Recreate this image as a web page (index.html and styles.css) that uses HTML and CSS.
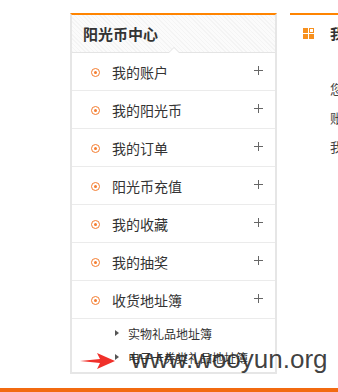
FILE: index.html
```html
<!DOCTYPE html>
<html lang="zh-CN">
<head>
    <meta charset="UTF-8">
    <title>阳光币中心</title>
    <link rel="stylesheet" href="styles.css">
</head>
<body>
    <div class="page">
        <div class="sidebar">
            <div class="side-head">
                <h3>阳光币中心</h3>
                <span class="notch"></span>
            </div>
            <ul class="menu">
                <li class="menu-item"><span class="dot"></span><span class="label">我的账户</span><span class="plus"></span></li>
                <li class="menu-item"><span class="dot"></span><span class="label">我的阳光币</span><span class="plus"></span></li>
                <li class="menu-item"><span class="dot"></span><span class="label">我的订单</span><span class="plus"></span></li>
                <li class="menu-item"><span class="dot"></span><span class="label">阳光币充值</span><span class="plus"></span></li>
                <li class="menu-item"><span class="dot"></span><span class="label">我的收藏</span><span class="plus"></span></li>
                <li class="menu-item"><span class="dot"></span><span class="label">我的抽奖</span><span class="plus"></span></li>
                <li class="menu-item"><span class="dot"></span><span class="label">收货地址簿</span><span class="plus"></span></li>
            </ul>
            <ul class="sub-menu">
                <li class="sub-item"><span class="tri"></span>实物礼品地址簿</li>
                <li class="sub-item"><span class="tri"></span>电子卡券类礼品地址簿</li>
            </ul>
        </div>

        <div class="main">
            <div class="main-head">
                <span class="grid-icon">
                    <i></i><i class="hollow"></i><i></i><i></i>
                </span>
                <h3>我的账户</h3>
            </div>
            <div class="main-body">
                <p>您好，欢迎来到阳光币中心</p>
                <p>账户余额：0</p>
                <p>我的阳光币：0</p>
            </div>
        </div>
    </div>

    <div class="footer-bar"></div>

    <svg class="arrow" width="36" height="16" viewBox="0 0 36 16">
        <polygon points="0,8 20,6 17,0 35,8 17,16 20,10" fill="#f0302a"/>
    </svg>
    <div class="watermark">www.wooyun.org</div>
</body>
</html>
```

FILE: styles.css
```css
body {
    margin: 0;
    padding: 0;
    width: 338px;
    height: 392px;
    overflow: hidden;
    position: relative;
    background-color: #ffffff;
    font-family: "Microsoft YaHei", "Noto Sans CJK SC", sans-serif;
    color: #333;
}
ul {
    list-style: none;
    margin: 0;
    padding: 0;
}
h3 {
    margin: 0;
}
.page {
    display: flex;
    align-items: flex-start;
    gap: 13px;
    padding: 13px 0 0 70px;
}
.sidebar {
    flex: none;
    width: 203px;
    border: 2px solid #e6e6e6;
    border-top: 2px solid #ff8400;
    background-color: #fff;
}
.side-head {
    position: relative;
    height: 37px;
    border-bottom: 1px solid #e4e4e4;
    background: repeating-linear-gradient(45deg, #f4f4f4 0, #f4f4f4 1px, #fbfbfb 1px, #fbfbfb 3px);
}
.side-head h3 {
    font-size: 15px;
    font-weight: bold;
    line-height: 37px;
    padding-left: 11px;
    color: #333;
}
.notch {
    position: absolute;
    left: 96px;
    bottom: -1px;
    width: 0;
    height: 0;
    border-left: 6px solid transparent;
    border-right: 6px solid transparent;
    border-bottom: 6px solid #e4e4e4;
}
.notch::after {
    content: "";
    position: absolute;
    left: -5px;
    top: 1px;
    border-left: 5px solid transparent;
    border-right: 5px solid transparent;
    border-bottom: 5px solid #fff;
}
.menu-item {
    display: flex;
    align-items: center;
    height: 37px;
    border-bottom: 1px solid #ebebeb;
    padding: 0 12px 0 19px;
}
.dot {
    box-sizing: border-box;
    width: 9px;
    height: 9px;
    border: 1.5px solid #f47d30;
    border-radius: 50%;
    position: relative;
    margin-right: 12px;
    margin-top: 2px;
}
.dot::after {
    content: "";
    position: absolute;
    left: 1.5px;
    top: 1.5px;
    width: 3px;
    height: 3px;
    border-radius: 50%;
    background-color: #f47d30;
}
.label {
    flex: 1;
    font-size: 14px;
}
.plus {
    width: 9px;
    height: 9px;
    position: relative;
    margin-top: -2px;
}
.plus::before, .plus::after {
    content: "";
    position: absolute;
    background-color: #666;
}
.plus::before {
    left: 0;
    top: 4px;
    width: 9px;
    height: 1px;
}
.plus::after {
    left: 4px;
    top: 0;
    width: 1px;
    height: 9px;
}
.sub-menu {
    padding: 2px 0 3px 0;
}
.sub-item {
    display: flex;
    align-items: center;
    height: 24px;
    padding-left: 43px;
    font-size: 12px;
    color: #333;
}
.tri {
    width: 0;
    height: 0;
    border-top: 3px solid transparent;
    border-bottom: 3px solid transparent;
    border-left: 4px solid #555;
    margin-right: 9px;
}
.main {
    flex: 1;
    border-top: 2px solid #ff8400;
    white-space: nowrap;
}
.main-head {
    display: flex;
    align-items: center;
    height: 36px;
    padding-left: 13px;
}
.grid-icon {
    display: grid;
    grid-template-columns: 5px 5px;
    grid-template-rows: 5px 5px;
    gap: 1px;
    margin-right: 16px;
}
.grid-icon i {
    background-color: #f7901e;
}
.grid-icon i.hollow {
    background-color: #fff;
    border: 1px solid #f7901e;
    box-sizing: border-box;
}
.main-head h3 {
    font-size: 14px;
    font-weight: bold;
    color: #333;
}
.main-body {
    padding: 23px 0 0 40px;
}
.main-body p {
    margin: 0;
    font-size: 13px;
    line-height: 29px;
    color: #444;
}
.footer-bar {
    position: absolute;
    left: 0;
    right: 0;
    bottom: 0;
    height: 4px;
    background-color: #f26a10;
}
.arrow {
    position: absolute;
    left: 80px;
    top: 353px;
}
.watermark {
    position: absolute;
    left: 131px;
    top: 344px;
    font-family: "Liberation Sans", Arial, sans-serif;
    font-size: 26px;
    color: rgba(40, 40, 40, 0.88);
}
```
